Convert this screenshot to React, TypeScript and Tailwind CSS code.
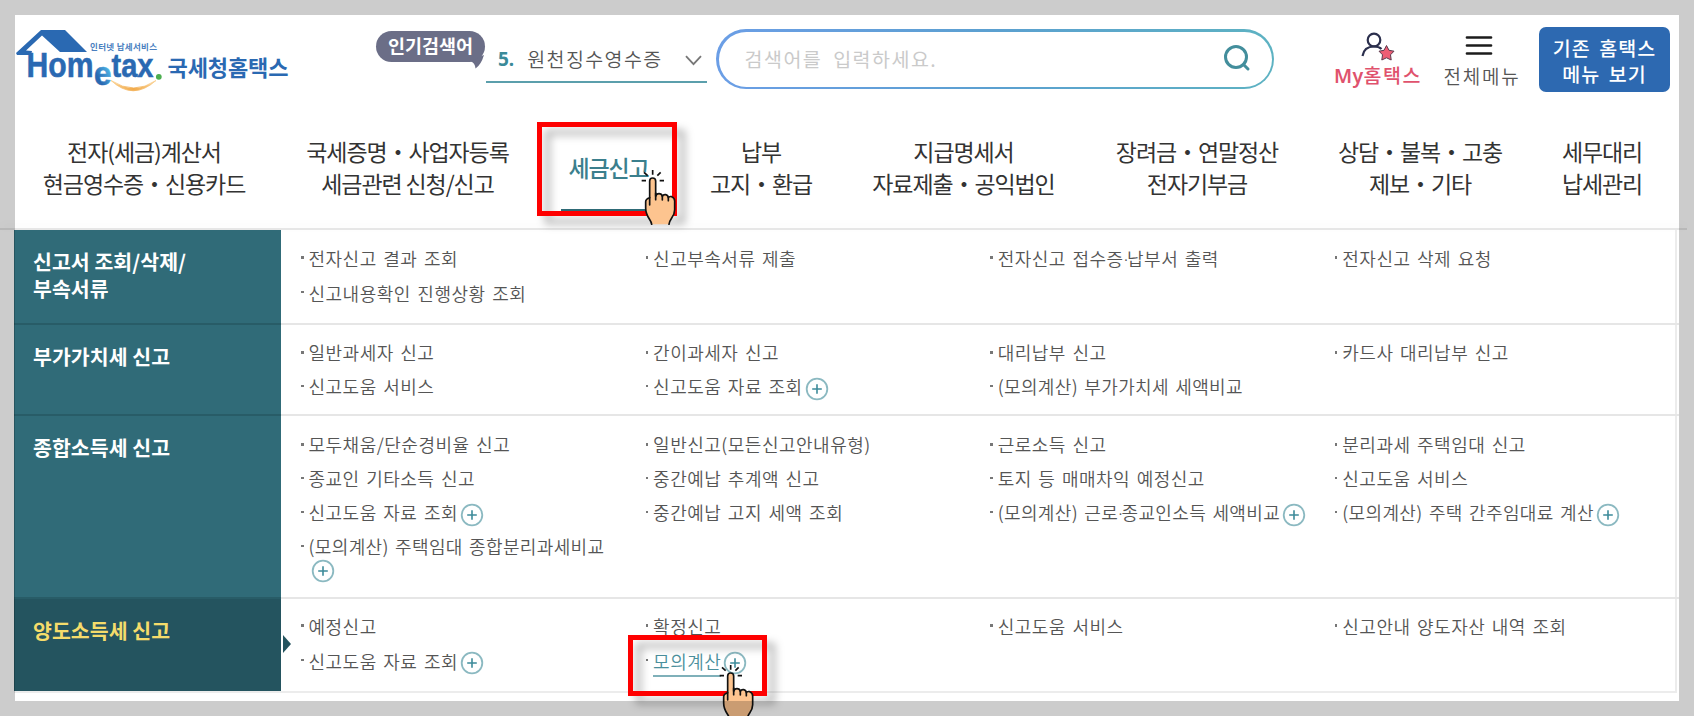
import clsx from "clsx";

type Item = { label: string; plus?: boolean; wrapPlus?: boolean; active?: boolean };
type Section = { title: string[]; height: string; rows: string; active?: boolean; columns: Item[][] };

const GNB: { lines: string[]; width: string; active?: boolean }[] = [
  { lines: ["전자(세금)계산서", "현금영수증・신용카드"], width: "w-[258px]" },
  { lines: ["국세증명・사업자등록", "세금관련 신청/신고"], width: "w-[269px]" },
  { lines: ["세금신고"], width: "w-[133px]", active: true },
  { lines: ["납부", "고지・환급"], width: "w-[172px]" },
  { lines: ["지급명세서", "자료제출・공익법인"], width: "w-[233px]" },
  { lines: ["장려금・연말정산", "전자기부금"], width: "w-[234px]" },
  { lines: ["상담・불복・고충", "제보・기타"], width: "w-[212px]" },
  { lines: ["세무대리", "납세관리"], width: "w-[152px]" },
];

const SECTIONS: Section[] = [
  {
    title: ["신고서 조회/삭제/", "부속서류"],
    height: "h-[93px]",
    rows: "pt-[11px] leading-[34.6px]",
    columns: [
      [{ label: "전자신고 결과 조회" }, { label: "신고내용확인 진행상황 조회" }],
      [{ label: "신고부속서류 제출" }],
      [{ label: "전자신고 접수증·납부서 출력" }],
      [{ label: "전자신고 삭제 요청" }],
    ],
  },
  {
    title: ["부가가치세 신고"],
    height: "h-[91px]",
    rows: "pt-[11px] leading-[33.7px]",
    columns: [
      [{ label: "일반과세자 신고" }, { label: "신고도움 서비스" }],
      [{ label: "간이과세자 신고" }, { label: "신고도움 자료 조회", plus: true }],
      [{ label: "대리납부 신고" }, { label: "(모의계산) 부가가치세 세액비교" }],
      [{ label: "카드사 대리납부 신고" }],
    ],
  },
  {
    title: ["종합소득세 신고"],
    height: "h-[183px]",
    rows: "pt-[12px] leading-[33.9px]",
    columns: [
      [
        { label: "모두채움/단순경비율 신고" },
        { label: "종교인 기타소득 신고" },
        { label: "신고도움 자료 조회", plus: true },
        { label: "(모의계산) 주택임대 종합분리과세비교", wrapPlus: true },
      ],
      [{ label: "일반신고(모든신고안내유형)" }, { label: "중간예납 추계액 신고" }, { label: "중간예납 고지 세액 조회" }],
      [
        { label: "근로소득 신고" },
        { label: "토지 등 매매차익 예정신고" },
        { label: "(모의계산) 근로·종교인소득 세액비교", plus: true },
      ],
      [
        { label: "분리과세 주택임대 신고" },
        { label: "신고도움 서비스" },
        { label: "(모의계산) 주택 간주임대료 계산", plus: true },
      ],
    ],
  },
  {
    title: ["양도소득세 신고"],
    height: "h-[94px]",
    rows: "pt-[10px] leading-[34.6px]",
    active: true,
    columns: [
      [{ label: "예정신고" }, { label: "신고도움 자료 조회", plus: true }],
      [{ label: "확정신고" }, { label: "모의계산", plus: true, active: true }],
      [{ label: "신고도움 서비스" }],
      [{ label: "신고안내 양도자산 내역 조회" }],
    ],
  },
];

function Logo() {
  return (
    <svg width="280" height="75" viewBox="15 25 280 75" className="shrink-0">
      <defs>
        <linearGradient id="e" x1="1" y1="0" x2="0.2" y2="1">
          <stop offset="0.3" stopColor="#4db4e6" />
          <stop offset="0.75" stopColor="#2a69b2" />
        </linearGradient>
        <linearGradient id="smile">
          <stop offset="0" stopColor="#f9cf8d" />
          <stop offset="0.5" stopColor="#f2ab4c" />
          <stop offset="1" stopColor="#f9cf8d" />
        </linearGradient>
      </defs>
      <path d="M16 53 41 30H65L87 52H60L42 35.500 26 50.500 32 51 31 55H17Z" fill="#2a69b2" />
      <g fontFamily="Liberation Sans, sans-serif" fontWeight="700" fill="#2a69b2">
        <text x="26.500" y="77" fontSize="35" textLength="67" lengthAdjust="spacingAndGlyphs" stroke="#2a69b2" strokeWidth="0.500">Hom</text>
        <text x="94" y="85" fontSize="34" textLength="17.500" lengthAdjust="spacingAndGlyphs" fill="url(#e)" stroke="url(#e)" strokeWidth="0.600">e</text>
        <text x="111.500" y="77" fontSize="33" textLength="42" lengthAdjust="spacingAndGlyphs" stroke="#2a69b2" strokeWidth="0.500">tax</text>
      </g>
      <circle cx="158.800" cy="76.800" r="2.900" fill="#4caf50" />
      <path d="M111 80.500Q133 101 156 80.500Q134 95.500 111 80.500Z" fill="url(#smile)" stroke="url(#smile)" strokeWidth="0.800" />
      <g fontFamily="Noto Sans CJK KR, sans-serif" fontWeight="700">
        <text x="90" y="49.500" fontSize="8.500" textLength="67" fill="#4a7fbf">인터넷 납세서비스</text>
        <text x="167.500" y="75.500" fontSize="22" textLength="121" fill="#2a69b2">국세청홈택스</text>
      </g>
    </svg>
  );
}

function Hand({ className }: { className?: string }) {
  return (
    <svg width="36" height="56" viewBox="0 0 108 168" className={className} fill="none" stroke="#111" strokeWidth="5" strokeLinecap="round" strokeLinejoin="round">
      <path
        d="M32 166C31 152 14 144 14 118V98Q14 90 26 86V36Q26 27 35 27T44 36V82Q46 74 54 74T64 82Q67 76 74 77T82 86Q85 81 92 83Q101 86 101 96V122C101 144 86 148 84 166"
        fill="#fdc48f"
      />
      <path d="M26 86V108M44 72V92M64 82V93M82 86V95" />
      <path d="M35 3V17M9 10 20 20M59 10 49 20M2 35H15M56 35H69" strokeLinecap="butt" />
    </svg>
  );
}

function PlusIcon({ className }: { className?: string }) {
  return (
    <svg width="24" height="24" viewBox="0 0 24 24" className={className} fill="none">
      <circle cx="12" cy="12" r="10.300" stroke="#8bb9c1" strokeWidth="1.800" />
      <path d="M12 7.200V16.800M7.200 12H16.800" stroke="#3d8b9a" strokeWidth="1.600" />
    </svg>
  );
}

function Header() {
  return (
    <header className="flex h-[98px] items-start pl-[15px]">
      <div className="mt-[25px]"><Logo /></div>
      <div className="relative mt-[31px] ml-[81px] flex h-[31px] w-[109px] items-center justify-center rounded-full bg-[#6b6e87] text-[18.5px] font-bold text-white">
        <span className="-mt-[2px]">인기검색어</span>
        <svg width="14" height="14" viewBox="0 0 14 14" className="absolute right-0 bottom-[-7px]">
          <path d="M0 6.500Q4 8 4.500 13.500Q10 10 13 0L8 2Z" fill="#6b6e87" />
        </svg>
      </div>
      <div className="mt-[40px] ml-px flex h-[43px] w-[221px] items-start border-b-2 border-[#5b9fac] pl-[12px]">
        <span className="font-['Noto_Sans'] text-[19px] leading-[38px] font-bold text-[#3a8a99]">5.</span>
        <span className="ml-[13px] text-[19.5px] leading-[38px] font-[350] tracking-[1.4px] text-[#555]">원천징수영수증</span>
        <svg width="17" height="11" viewBox="0 0 17 11" className="mt-[15px] ml-[22px]" fill="none" stroke="#777" strokeWidth="1.800">
          <path d="M1 1.200 8.500 9.200 16 1.200" />
        </svg>
      </div>
      <div className="mt-[29px] ml-[9px] h-[60px] w-[558px] rounded-full bg-gradient-to-r from-[#6b9ee6] via-[#5ba0d0] to-[#5db2c2] p-[2.5px]">
        <div className="flex h-full items-center justify-between rounded-full bg-white pr-[20px] pl-[26px]">
          <span className="text-[19.5px] tracking-[1.5px] text-[#cacaca] [word-spacing:5px]">검색어를 입력하세요.</span>
          <svg width="30" height="30" viewBox="0 0 30 30" className="-mt-[3px]" fill="none" stroke="#438e9c" strokeWidth="3" strokeLinecap="round">
            <circle cx="14" cy="14" r="10.500" />
            <path d="M21.500 21.500 26 26" />
          </svg>
        </div>
      </div>
      <div className="mt-[31px] ml-[58px] flex w-[92px] flex-col items-center">
        <svg width="34" height="31" viewBox="0 0 34 31" fill="none">
          <circle cx="13" cy="9" r="6.300" stroke="#2b2f4d" strokeWidth="2.200" />
          <path d="M1.500 25Q3 15.500 13 15.500Q18 15.500 20.500 18" stroke="#2b2f4d" strokeWidth="2.200" />
          <path d="M25.500 14.500 28 19.300 33 20.200 29.500 23.800 30.200 29 25.500 26.800 20.800 29 21.500 23.800 18 20.200 23 19.300Z" fill="#ee5d74" stroke="#5a3a4d" strokeWidth="1" />
        </svg>
        <span className="-mt-px text-[19.5px] leading-[28px] font-medium tracking-[1.6px] whitespace-nowrap text-[#e0526d]">
          <b className="font-['Noto_Sans'] font-semibold tracking-[0.3px]">My</b>홈택스
        </span>
      </div>
      <div className="mt-[36px] ml-[18px] flex w-[80px] flex-col items-center">
        <svg width="28" height="20" viewBox="0 0 28 20" className="-ml-[6px]" stroke="#1c1c1c" strokeWidth="2.700" strokeLinecap="round">
          <path d="M2 1.500H26M2 9.500H26M2 17.500H26" />
        </svg>
        <span className="mt-[6px] text-[19px] leading-[28px] font-[350] tracking-[1.8px] whitespace-nowrap text-[#555]">전체메뉴</span>
      </div>
      <button className="mt-[27px] ml-[17px] h-[65px] w-[131px] rounded-[7px] bg-[#2d69b1] pt-[2px] text-[19.5px] leading-[26px] font-medium tracking-[1.1px] whitespace-nowrap text-white [word-spacing:3px]">
        기존 홈택스
        <br />
        메뉴 보기
      </button>
    </header>
  );
}

function Gnb() {
  return (
    <nav className="flex h-[130px] pl-[15px] text-center text-[23px] leading-[32.5px] font-normal tracking-[-1.1px] whitespace-nowrap text-[#333]">
      {GNB.map((m) => (
        <div key={m.lines[0]} className={clsx("relative flex h-[138px] flex-col items-center justify-center", m.width)}>
          {m.lines.map((l) => (
            <span key={l} className={clsx(m.active && "font-medium text-[#3b7f8d]")}>{l}</span>
          ))}
          {m.active && (
            <>
              <div className="absolute top-[111px] left-[19px] h-[3px] w-[96px] bg-[#2f6b77]" />
              <div className="absolute top-[24px] -left-[5px] z-10 h-[94px] w-[140px] border-[5px] border-[#fe0000] drop-shadow-[8px_8px_4px_rgba(0,0,0,0.3)]" />
              <Hand className="absolute top-[71px] left-[99px] z-20" />
            </>
          )}
        </div>
      ))}
    </nav>
  );
}

// the middle dot is full width in the Korean face, so it gets the latin one
function Label({ text }: { text: string }) {
  const [head, tail] = text.split("·");
  if (!tail) return <>{text}</>;
  return <>{head}<span className="font-['Noto_Sans'] tracking-[-1px]">·</span>{tail}</>;
}

function MenuItem({ item }: { item: Item }) {
  return (
    <li className={clsx("relative pl-[7.5px] whitespace-nowrap", item.label.startsWith("(") && "tracking-[0.35px]")}>
      <i className="absolute top-[15px] left-0 size-[2.5px] bg-[#777]" />
      <div className="flex items-center">
        <span className={clsx(item.active && "relative text-[#4a8f9c]")}>
          <Label text={item.label} />
          {item.active && <i className="absolute bottom-px left-0 h-[2px] w-full bg-[#7fb0b9]" />}
        </span>
        {item.plus && <PlusIcon className="mt-[4px] ml-[2px]" />}
      </div>
      {item.wrapPlus && <PlusIcon className="-mt-[5px] ml-[2px]" />}
    </li>
  );
}

export default function App() {
  return (
    <div className="relative h-[716px] w-[1694px] overflow-hidden bg-white font-['Noto_Sans_CJK_KR',sans-serif]">
      <Header />
      <Gnb />
      <div className="h-[2px] w-[1687px] bg-[#e6e6e6] shadow-[0_-3px_8px_rgba(0,0,0,0.05)]" />
      <main className="ml-[14px] w-[1663px] border-r-2 border-b-2 border-[#ececec]">
        {SECTIONS.map((s, n) => (
          <section key={s.title[0]} className={clsx("flex", s.height)}>
            <h2
              className={clsx(
                "relative w-[267px] shrink-0 pt-[18px] pl-[19px] text-[20.5px] leading-[27px] font-bold tracking-[0.05px]",
                s.active ? "bg-[#24545f] text-[#f5dc6b]" : "bg-[#306b78] text-white",
                n > 0 && "border-t-2 border-[#285c67]",
              )}
            >
              {s.title.map((t) => <span key={t} className="block">{t}</span>)}
              {s.active && (
                <svg width="8" height="18" viewBox="0 0 8 18" className="absolute top-[36px] -right-[10px]">
                  <path d="M0 0 8 9 0 18Z" fill="#24545f" />
                </svg>
              )}
            </h2>
            <div
              className={clsx(
                "flex grow pl-[20px] text-[18px] font-[350] tracking-[0.5px] [word-spacing:2px] text-[#555]",
                s.rows,
                n > 0 && "border-t-2 border-[#e6e6e6]",
              )}
            >
              {s.columns.map((col, c) => (
                <ul key={c} className="w-[344.6px] shrink-0">
                  {col.map((item) => <MenuItem key={item.label} item={item} />)}
                </ul>
              ))}
            </div>
          </section>
        ))}
      </main>
      {/* click guide for the highlighted menu */}
      <div className="absolute top-[635px] left-[628px] h-[61px] w-[139px] border-[5px] border-[#fe0000] drop-shadow-[8px_8px_4px_rgba(0,0,0,0.3)]" />
      <Hand className="absolute top-[664px] left-[719px]" />
      <div className="pointer-events-none absolute inset-0 border-[15px] border-black/20" />
    </div>
  );
}
